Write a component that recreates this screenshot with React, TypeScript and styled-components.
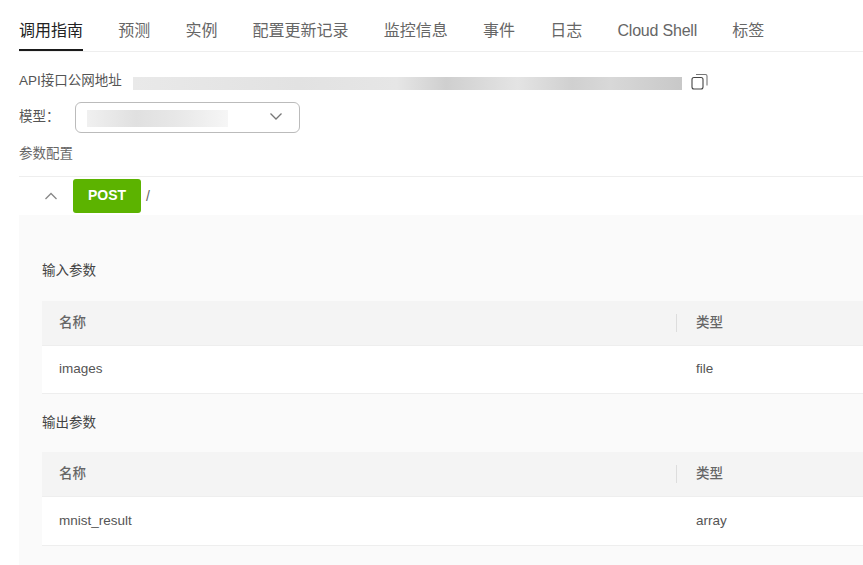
import * as React from "react";
import styled, {createGlobalStyle} from "styled-components";

const GlobalStyle = createGlobalStyle`
  html, body {
    margin: 0;
    padding: 0;
    background: #fff;
    overflow: hidden;
  }
  body {
    font-family: "Liberation Sans", "Noto Sans CJK SC", sans-serif;
    color: #444;
  }
`;

const Page = styled.div`
  width: 863px;
  height: 565px;
  overflow: hidden;
  padding-left: 19px;
  box-sizing: border-box;
`;

const Tabs = styled.div`
  display: flex;
  gap: 35.2px;
  height: 52px;
  box-sizing: border-box;
  border-bottom: 1px solid #eee;
`;

const Tab = styled.div<{$active?: boolean; $latin?: boolean}>`
  height: 51px;
  box-sizing: border-box;
  padding-top: 21px;
  font-size: 16px;
  line-height: 20px;
  white-space: nowrap;
  letter-spacing: ${props => (props.$latin ? "-0.2px" : "0")};
  color: ${props => (props.$active ? "#222" : "#666")};
  border-bottom: ${props => (props.$active ? "2px solid #1a1a1a" : "none")};
`;

const ApiRow = styled.div`
  display: flex;
  align-items: center;
  height: 18px;
  margin-top: 22px;
  font-size: 13.5px;
  line-height: 18px;
  color: #555;
`;

const ApiLabel = styled.span`
  width: 114px;
  padding-bottom: 4px;
  white-space: nowrap;
`;

const BlurredUrl = styled.div`
  width: 549px;
  height: 13px;
  background: linear-gradient(
    90deg,
    #e9e9e9 0%,
    #e2e2e2 30%,
    #e6e6e6 48%,
    #cfcfcf 57%,
    #e4e4e4 70%,
    #d0d0d0 80%,
    #d8d8d8 87%,
    #c8c8c8 100%
  );
`;

const CopyIcon = styled.svg`
  width: 17px;
  height: 17px;
  margin-left: 9px;
  margin-top: -4px;
`;

const ModelRow = styled.div`
  display: flex;
  align-items: center;
  margin-top: 9.5px;
  font-size: 13.5px;
  line-height: 18px;
  color: #555;
`;

const ModelLabel = styled.span`
  width: 56px;
`;

const ModelSelect = styled.div`
  display: flex;
  align-items: center;
  justify-content: space-between;
  width: 225px;
  height: 31px;
  box-sizing: border-box;
  padding: 0 16px 0 11px;
  border: 1px solid #bbb;
  border-radius: 6px;
`;

const BlurredModel = styled.div`
  width: 141px;
  height: 17px;
  margin-top: 3px;
  background: linear-gradient(90deg, #f0f0f0 0%, #e0e0e0 35%, #e8e8e8 65%, #f6f6f6 100%);
`;

const SelectArrow = styled.svg`
  width: 14px;
  height: 14px;
  margin-top: -2px;
`;

const ConfigTitle = styled.div`
  margin-top: 12px;
  font-size: 13.5px;
  line-height: 17px;
  color: #666;
`;

const ApiHeader = styled.div`
  display: flex;
  align-items: center;
  height: 39px;
  margin-top: 14px;
  border-top: 1px solid #eee;
  box-sizing: border-box;
`;

const Collapse = styled.svg`
  width: 14px;
  height: 14px;
  margin-left: 25px;
  margin-right: 15px;
`;

const MethodBadge = styled.span`
  display: flex;
  align-items: center;
  justify-content: center;
  width: 68px;
  height: 34px;
  padding-bottom: 1px;
  box-sizing: border-box;
  border-radius: 3px;
  background: #5cb300;
  color: #fff;
  font-size: 14px;
  font-weight: bold;
`;

const ApiPath = styled.span`
  margin-left: 5px;
  font-size: 14px;
  color: #666;
`;

const Panel = styled.div`
  height: 350px;
  padding: 47px 0 0 23px;
  background: #fafafa;
  box-sizing: border-box;
`;

const SectionTitle = styled.div<{$gap?: number}>`
  margin-top: ${props => props.$gap || 0}px;
  font-size: 13.5px;
  line-height: 17px;
  color: #444;
`;

const Table = styled.div<{$gap: number}>`
  margin-top: ${props => props.$gap}px;
`;

const HeadRow = styled.div`
  display: flex;
  align-items: center;
  height: 45px;
  box-sizing: border-box;
  background: #f4f4f4;
  border-bottom: 1px solid #eee;
  font-size: 13.5px;
  font-weight: 500;
  color: #666;
`;

const BodyRow = styled.div<{$height: number}>`
  display: flex;
  align-items: center;
  height: ${props => props.$height}px;
  box-sizing: border-box;
  background: #fff;
  border-bottom: 1px solid #eee;
  font-size: 13.5px;
  color: #555;
`;

const NameCell = styled.div`
  width: 634px;
  padding-left: 17px;
  box-sizing: border-box;
  line-height: 18px;
`;

const TypeCell = styled.div<{$divided?: boolean}>`
  padding-left: 19px;
  border-left: 1px solid ${props => (props.$divided ? "#ddd" : "transparent")};
  line-height: 18px;
`;

const tabs = [
  "调用指南",
  "预测",
  "实例",
  "配置更新记录",
  "监控信息",
  "事件",
  "日志",
  "Cloud Shell",
  "标签",
];

interface ParamTableProps {
  name: string;
  type: string;
  height: number;
  gap: number;
}

const ParamTable = ({name, type, height, gap}: ParamTableProps) => (
  <Table $gap={gap}>
    <HeadRow>
      <NameCell>名称</NameCell>
      <TypeCell $divided>类型</TypeCell>
    </HeadRow>
    <BodyRow $height={height}>
      <NameCell>{name}</NameCell>
      <TypeCell>{type}</TypeCell>
    </BodyRow>
  </Table>
);

const App = () => (
  <Page>
    <GlobalStyle />
    <Tabs>
      {tabs.map((tab, i) => (
        <Tab key={tab} $active={i === 0} $latin={tab === "Cloud Shell"}>
          {tab}
        </Tab>
      ))}
    </Tabs>
    <ApiRow>
      <ApiLabel>API接口公网地址</ApiLabel>
      <BlurredUrl />
      <CopyIcon viewBox="0 0 17 17" fill="none" stroke="#444" strokeWidth="1.1">
        <rect x="1" y="4.5" width="11" height="11.5" rx="2" />
        <path d="M5 1.5h9.5a1.5 1.5 0 0 1 1.5 1.5v9.5" stroke="#777" />
      </CopyIcon>
    </ApiRow>
    <ModelRow>
      <ModelLabel>模型：</ModelLabel>
      <ModelSelect>
        <BlurredModel />
        <SelectArrow viewBox="0 0 14 14" fill="none" stroke="#777" strokeWidth="1.3">
          <path d="M1.5 4.5 7 10l5.5-5.5" />
        </SelectArrow>
      </ModelSelect>
    </ModelRow>
    <ConfigTitle>参数配置</ConfigTitle>
    <ApiHeader>
      <Collapse viewBox="0 0 14 14" fill="none" stroke="#888" strokeWidth="1.3">
        <path d="M1.5 10 7 4.5l5.5 5.5" />
      </Collapse>
      <MethodBadge>POST</MethodBadge>
      <ApiPath>/</ApiPath>
    </ApiHeader>
    <Panel>
      <SectionTitle>输入参数</SectionTitle>
      <ParamTable name="images" type="file" height={48} gap={22} />
      <SectionTitle $gap={20}>输出参数</SectionTitle>
      <ParamTable name="mnist_result" type="array" height={49} gap={21} />
    </Panel>
  </Page>
);

export default App;
